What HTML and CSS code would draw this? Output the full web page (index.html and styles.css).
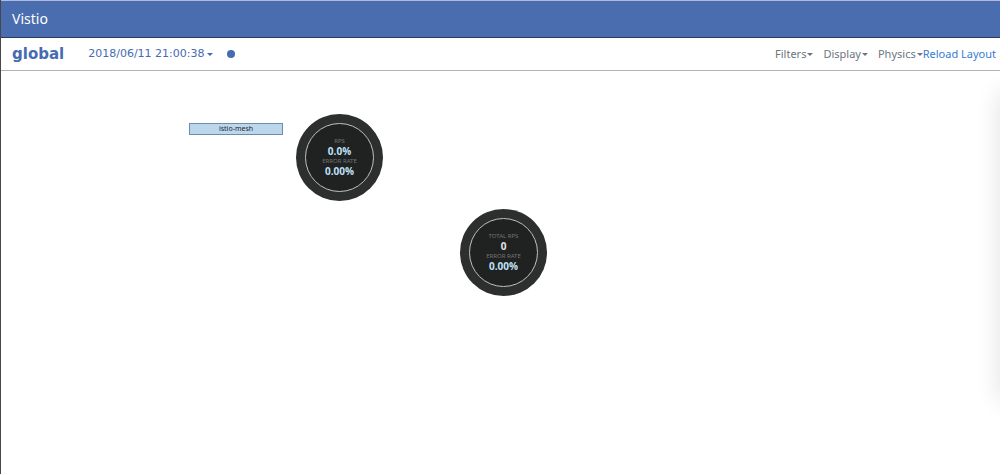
FILE: index.html
```html
<!DOCTYPE html>
<html lang="en">
<head>
<meta charset="utf-8">
<title>Vistio</title>
<link rel="stylesheet" href="styles.css">
</head>
<body>
<div class="app">
  <header class="navbar"><a class="brand" href="#">Vistio</a></header>
  <nav class="subheader">
    <a class="breadcrumb" href="#">global</a>
    <button class="menu time" type="button">2018/06/11 21:00:38<span class="caret"></span></button>
    <span class="status"></span>
    <div class="tools">
      <button class="menu" type="button">Filters<span class="caret"></span></button>
      <button class="menu" type="button">Display<span class="caret"></span></button>
      <button class="menu" type="button">Physics<span class="caret"></span></button>
      <a class="reload" href="#">Reload Layout</a>
    </div>
  </nav>
  <main class="graph">
    <div class="label">istio-mesh</div>
    <section class="node mesh">
      <div class="ring">
        <span class="metric">RPS</span>
        <strong class="value">0.0%</strong>
        <span class="metric">ERROR RATE</span>
        <strong class="value">0.00%</strong>
      </div>
    </section>
    <section class="node total">
      <div class="ring">
        <span class="metric">TOTAL RPS</span>
        <strong class="value count">0</strong>
        <span class="metric">ERROR RATE</span>
        <strong class="value">0.00%</strong>
      </div>
    </section>
    <div class="edge-shadow"></div>
  </main>
</div>
</body>
</html>
```
FILE: styles.css
```css
* {
  box-sizing: border-box;
}

body {
  margin: 0;
  background: #fff;
  font: 11px/16px Verdana, "DejaVu Sans", sans-serif;
}

a {
  text-decoration: none;
}

.app {
  display: flex;
  flex-direction: column;
  min-height: 100vh;
  border-left: 1px solid #46464c;
}

.navbar {
  display: flex;
  align-items: center;
  height: 38px;
  padding: 0 11px;
  background: #496dae;
  border-top: 1px solid #b3b8df;
  border-bottom: 1px solid #293765;
}

.brand {
  color: #fff;
  font-family: "Noto Sans", sans-serif;
  font-size: 14px;
}

.subheader {
  display: flex;
  align-items: center;
  height: 33px;
  padding: 0 4px 0 11px;
  border-bottom: 1px solid #b2b2b2;
}

.breadcrumb {
  color: #456bb3;
  font-size: 15px;
  font-weight: bold;
}

.menu {
  display: flex;
  align-items: center;
  gap: 1px;
  padding: 0;
  border: 0;
  background: none;
  color: #6c757d;
  font: inherit;
}

.time {
  gap: 2px;
  margin-left: 24px;
  color: #456bb3;
}

.caret {
  border: 3px solid transparent;
  border-top-color: currentColor;
  border-bottom: 0;
}

.status {
  width: 8px;
  height: 8px;
  margin-left: 14px;
  border-radius: 50%;
  background: #456bb3;
}

.tools {
  display: flex;
  margin-left: auto;
  font-family: "Noto Sans", sans-serif;
}

.tools .menu + .menu {
  margin-left: 10px;
}

.reload {
  color: #387bd2;
}

.graph {
  position: relative;
  flex: 1;
  overflow: hidden;
  font-family: "Noto Sans", sans-serif;
}

.label {
  position: absolute;
  top: 52px;
  left: 188px;
  width: 94px;
  border: 1px solid #6d8bad;
  background: #bcd6ec;
  color: #202830;
  font-size: 7px;
  line-height: 10px;
  text-align: center;
}

.node {
  position: absolute;
  width: 87px;
  height: 87px;
  padding: 9px;
  border-radius: 50%;
  background: #2d2e2e;
}

.mesh {
  top: 43px;
  left: 295px;
}

.total {
  top: 138px;
  left: 459px;
}

.ring {
  display: flex;
  flex-direction: column;
  align-items: center;
  justify-content: center;
  height: 100%;
  padding-bottom: 3px;
  border: 1px solid #bfc0c0;
  border-radius: 50%;
  background: #202121;
}

.metric {
  color: #737575;
  font-size: 6px;
  line-height: 10px;
}

.value {
  color: #bfe0f7;
  font-family: "Open Sans", "Noto Sans", sans-serif;
  font-size: 10px;
  line-height: 10px;
}

.count {
  color: #e4e5e6;
}

.edge-shadow {
  position: absolute;
  top: 22px;
  bottom: 74px;
  left: 100%;
  width: 20px;
  box-shadow: 0 0 24px #0002;
}
```
